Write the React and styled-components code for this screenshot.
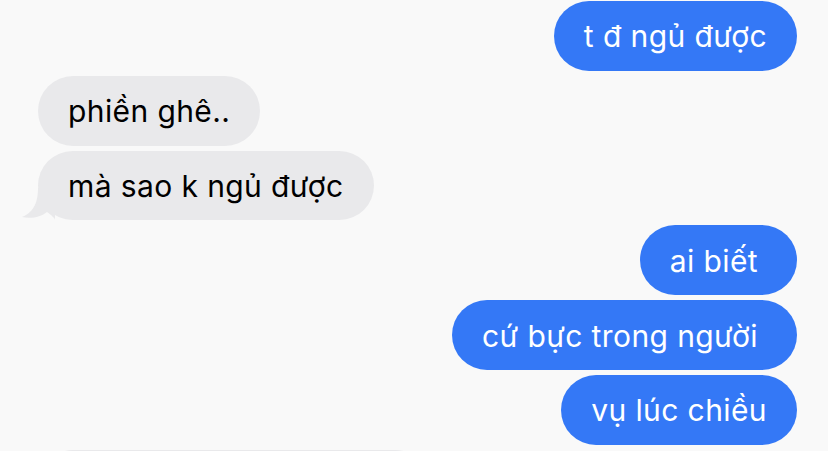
import React from "react";
import styled, { createGlobalStyle } from "styled-components";

const Global = createGlobalStyle`
  html, body { margin: 0; padding: 0; background: #f9f9f9; }
  body { font-family: Inter, "Noto Sans", "Liberation Sans", sans-serif; overflow: hidden; }
`;

const Thread = styled.div`
  width: 828px;
  height: 451px;
  overflow: hidden;
  box-sizing: border-box;
  padding: 1px 31px 0 38px;
  display: flex;
  flex-direction: column;
  gap: 5px;
  background: #f9f9f9;
`;

const Row = styled.div`
  display: flex;
  justify-content: ${(p) => (p.$mine ? "flex-end" : "flex-start")};
  flex: none;
`;

const Bubble = styled.div`
  position: relative;
  height: 69.8px;
  box-sizing: border-box;
  border-radius: 35px;
  padding: 1px ${(p) => p.$padRight || 30}px 0 30px;
  display: flex;
  align-items: center;
  font-size: 30px;
  letter-spacing: 0.4px;
  white-space: nowrap;
  background: ${(p) => (p.$mine ? "#3478f6" : "#e9e9eb")};
  color: ${(p) => (p.$mine ? "#ffffff" : "#000000")};
  width: ${(p) => (p.$width ? p.$width + "px" : "auto")};
`;

const Tail = styled.svg`
  position: absolute;
  left: -17px;
  bottom: 0;
  width: 34px;
  height: 32px;
  overflow: visible;
`;

const messages = [
  { mine: true, text: "t đ ngủ được" },
  { mine: false, text: "phiền ghê.." },
  { mine: false, text: "mà sao k ngủ được", tail: true },
  { mine: true, text: "ai biết", padRight: 39 },
  { mine: true, text: "cứ bực trong người", padRight: 39 },
  { mine: true, text: "vụ lúc chiều" },
  { mine: false, text: "", width: 392 },
];

export default function App() {
  return (
    <>
      <Global />
      <Thread>
        {messages.map((m, i) => (
          <Row key={i} $mine={m.mine}>
            <Bubble $mine={m.mine} $padRight={m.padRight} $width={m.width}>
              {m.tail && (
                <Tail viewBox="0 0 34 32">
                  <path
                    d="M17 0 C17 12 14 24 1 29 C10 31 20 29 26 24 C30 27 34 30 34 32 L34 0 Z"
                    fill="#e9e9eb"
                  />
                </Tail>
              )}
              {m.text}
            </Bubble>
          </Row>
        ))}
      </Thread>
    </>
  );
}
